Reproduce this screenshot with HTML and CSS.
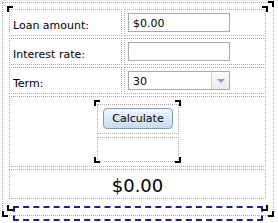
FILE: index.html
```html
<!DOCTYPE html>
<html lang="en">
<head>
    <meta charset="UTF-8">
    <meta name="viewport" content="width=device-width, initial-scale=1.0">
    <title>Loan calculator</title>
    <link rel="stylesheet" href="styles.css">
</head>
<body>
    <div class="form-box">
        <table class="loan">
            <tr>
                <td class="label">Loan amount:</td>
                <td class="field"><input type="text" class="textbox" value="$0.00"></td>
            </tr>
            <tr>
                <td class="label">Interest rate:</td>
                <td class="field"><input type="text" class="textbox" value=""></td>
            </tr>
            <tr>
                <td class="label">Term:</td>
                <td class="field">
                    <div class="dropdown">
                        <span class="dropdown-value">30</span>
                        <span class="dropdown-btn"><span class="arrow"></span></span>
                    </div>
                </td>
            </tr>
            <tr>
                <td colspan="2" class="actions">
                    <div class="panel">
                        <div class="slot"><button class="btn">Calculate</button></div>
                        <div class="slot slot-empty"></div>
                        <span class="grip grip-tl"></span>
                        <span class="grip grip-tr"></span>
                        <span class="grip grip-bl"></span>
                        <span class="grip grip-br"></span>
                    </div>
                </td>
            </tr>
            <tr>
                <td colspan="2" class="result">$0.00</td>
            </tr>
        </table>
        <div class="summary"></div>

        <span class="grip grip-tl table-tl"></span>
        <span class="grip grip-tr table-tr"></span>
        <span class="grip grip-bl table-bl"></span>
        <span class="grip grip-br table-br"></span>
        <span class="grip grip-tr box-tr"></span>
        <span class="grip grip-bl box-bl"></span>
        <span class="grip grip-br box-br"></span>
    </div>
</body>
</html>
```

FILE: styles.css
```css
* {
    padding: 0;
    margin: 0;
    box-sizing: border-box;
}
html, body {
    min-height: 100%;
}
body {
    min-height: 223px;
    background: #fff;
    border-top: 1px solid #efeedb;
    font-family: "DejaVu Sans", Verdana, sans-serif;
    font-size: 11px;
    color: #000;
}
.form-box {
    position: relative;
    width: 272px;
    height: 214px;
    margin: 1px 0 0 2px;
    padding: 4px 5px 0 4px;
    border: 1px dotted #aaa;
}
.loan {
    width: 261px;
    table-layout: fixed;
    border-collapse: separate;
    border-spacing: 2px;
}
.loan td {
    border: 1px dotted #aaa;
}
.label {
    width: 113px;
    padding: 6px 3px 0;
    line-height: 19px;
    vertical-align: top;
    white-space: nowrap;
}
.field {
    padding: 3px;
}
.textbox {
    display: block;
    width: 102px;
    height: 19px;
    padding: 2px 4px 0;
    border: 1px solid #a5acb5;
    background: #fff;
    font-family: inherit;
    font-size: 11px;
    color: #000;
    outline: none;
}
.dropdown {
    display: flex;
    width: 102px;
    height: 19px;
    border: 1px solid #a5acb5;
    background: #fff;
}
.dropdown-value {
    flex: 1;
    padding: 2px 0 0 4px;
    line-height: 15px;
}
.dropdown-btn {
    display: flex;
    justify-content: center;
    align-items: center;
    width: 18px;
    border-left: 1px solid #c8ced8;
    background: linear-gradient(#fafbfd, #e9edf3);
}
.arrow {
    width: 0;
    height: 0;
    border-left: 4px solid transparent;
    border-right: 4px solid transparent;
    border-top: 4px solid #8b9cc0;
}
.actions {
    padding: 3px;
}
.panel {
    position: relative;
    width: 87px;
    height: 63px;
    margin: 0 auto;
    padding: 4px 2px 1px 3px;
    display: flex;
    flex-direction: column;
    gap: 3px;
}
.slot {
    border: 1px dotted #aaa;
    height: 30px;
    padding-top: 3px;
    display: flex;
    justify-content: center;
    align-items: flex-start;
}
.slot-empty {
    height: 25px;
}
.btn {
    width: 70px;
    height: 21px;
    border: 1px solid #7f9ec4;
    border-radius: 4px;
    background: linear-gradient(#f4f8fd, #dbe7f5 50%, #c8dbf1);
    font-family: inherit;
    font-size: 11px;
    color: #000;
    cursor: pointer;
}
.result {
    padding: 5px 0 2px;
    line-height: 21px;
    font-size: 18px;
    text-align: center;
}
.summary {
    width: 250px;
    height: 15px;
    margin: 5px 0 0 6px;
    border: 2px dashed #1c1c94;
}
.grip {
    position: absolute;
    width: 6px;
    height: 6px;
    border: 0 solid #000;
}
.grip-tl { border-top-width: 2px; border-left-width: 2px; }
.grip-tr { border-top-width: 2px; border-right-width: 2px; }
.grip-bl { border-bottom-width: 2px; border-left-width: 2px; }
.grip-br { border-bottom-width: 2px; border-right-width: 2px; }
.panel .grip-tl { left: 0; top: 0; }
.panel .grip-tr { right: 0; top: 0; }
.panel .grip-bl { left: 0; bottom: 0; }
.panel .grip-br { right: 0; bottom: 0; }
.table-tl { left: 4px; top: 3px; }
.table-tr { left: 259px; top: 3px; }
.table-bl { left: 4px; top: 202px; }
.table-br { left: 259px; top: 202px; }
.box-tr { left: 265px; top: -2px; }
.box-bl { left: -1px; top: 208px; }
.box-br { left: 265px; top: 208px; }
```
